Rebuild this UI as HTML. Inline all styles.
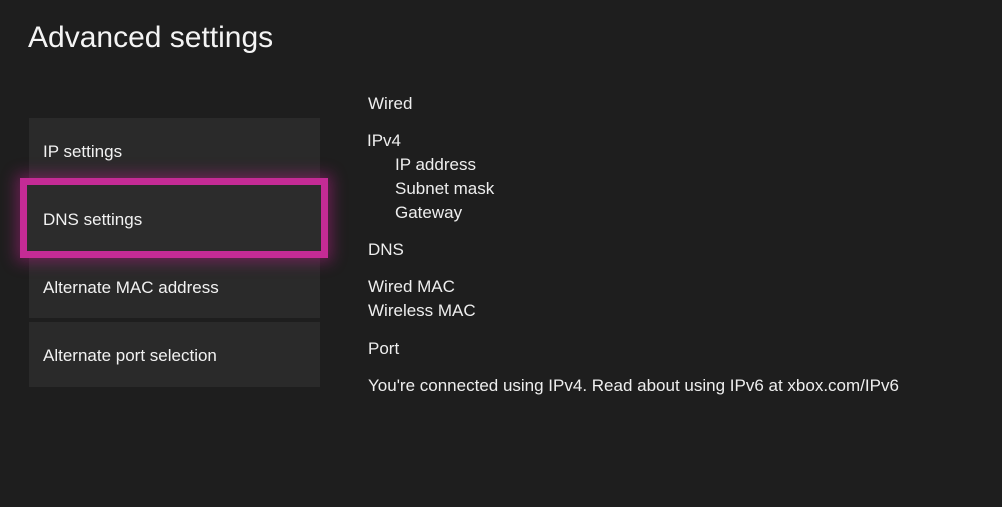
<!DOCTYPE html>
<html><head><style>
body{margin:0;width:1002px;height:507px;background:#1e1e1e;font-family:"Liberation Sans",sans-serif;color:#f2f2f2;position:relative;overflow:hidden}
.t{position:absolute;white-space:nowrap}
.tile{position:absolute;left:29px;width:291px;background:#2a2a2a}
.r{position:absolute;font-size:17px;white-space:nowrap;color:#eee}
</style></head><body>
<div class="t" style="left:28px;top:21px;font-size:30px;color:#f4f4f4">Advanced settings</div>
<div class="tile" style="top:118px;height:66px"></div>
<div class="tile" style="top:252px;height:66px"></div>
<div class="tile" style="top:322px;height:65px"></div>
<div style="position:absolute;left:20px;top:178px;width:294px;height:66px;border:7px solid #c42b95;background:#2c2c2c;box-shadow:0 0 14px 4px rgba(190,30,140,0.45)"></div>
<div class="t" style="left:43px;top:142px;font-size:17px">IP settings</div>
<div class="t" style="left:43px;top:210px;font-size:17px">DNS settings</div>
<div class="t" style="left:43px;top:278px;font-size:17px">Alternate MAC address</div>
<div class="t" style="left:43px;top:346px;font-size:17px">Alternate port selection</div>
<div class="r" style="left:368px;top:94px">Wired</div>
<div class="r" style="left:367px;top:131px">IPv4</div>
<div class="r" style="left:395px;top:155px">IP address</div>
<div class="r" style="left:395px;top:179px">Subnet mask</div>
<div class="r" style="left:395px;top:203px">Gateway</div>
<div class="r" style="left:368px;top:240px">DNS</div>
<div class="r" style="left:368px;top:277px">Wired MAC</div>
<div class="r" style="left:368px;top:301px">Wireless MAC</div>
<div class="r" style="left:368px;top:339px">Port</div>
<div class="r" style="left:368px;top:376px">You're connected using IPv4. Read about using IPv6 at xbox.com/IPv6</div>
</body></html>
